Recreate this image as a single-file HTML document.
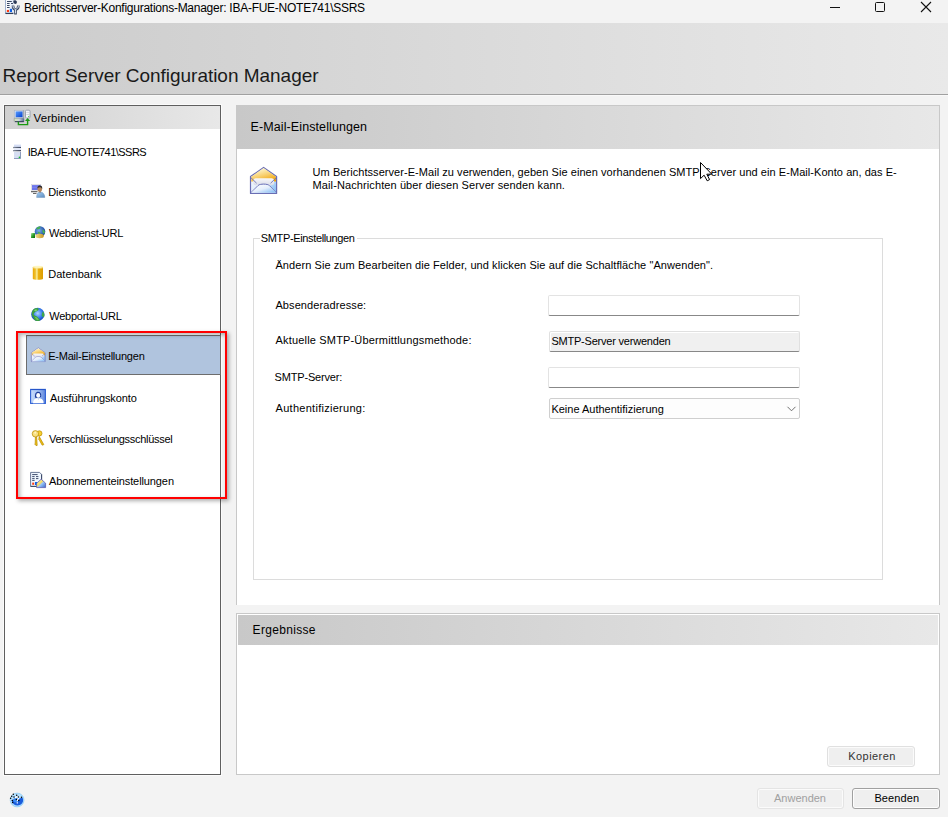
<!DOCTYPE html>
<html><head><meta charset="utf-8">
<style>
*{margin:0;padding:0;box-sizing:border-box}
html,body{width:948px;height:817px;overflow:hidden;background:#f3f3f3;font-family:"Liberation Sans",sans-serif;color:#000}
.a{position:absolute}
svg.a{overflow:visible}
.t{position:absolute;white-space:nowrap;line-height:1;font-size:11px}
</style></head><body>
<!-- title bar -->
<div class="a" style="left:0;top:0;width:948px;height:23px;background:#f3f3f3"></div>
<svg class="a" style="left:2px;top:0" width="20" height="18" viewBox="0 0 20 18">
 <defs><linearGradient id="tw" x1="0" y1="0" x2="1" y2="0"><stop offset="0" stop-color="#fff"/><stop offset="1" stop-color="#dfe9f8"/></linearGradient></defs>
 <path d="M3.6 -1V13.3H11.5" fill="none" stroke="#9fb0cc" stroke-width="1.2"/>
 <rect x="4.2" y="-1" width="7.5" height="14" fill="url(#tw)"/>
 <path d="M3.6 13.4H11.3" stroke="#2f3d5a" stroke-width="1.3"/>
 <path d="M5 1.5h4.8M5 3.5h2.6M9 3.5h2M5 5.5h2.6M5 7.5h2.6" stroke="#394865" stroke-width="1"/>
 <rect x="4.8" y="9.9" width="2.2" height="2.1" fill="#ff3a10"/>
 <rect x="7.8" y="8.8" width="2.2" height="3.2" fill="#0f62e6"/>
 <path d="M11.2 0.8C11.8 -0.2 14.2 -0.2 14.8 1.6C15.1 2.8 14.6 3.8 13.4 3.9L11.6 3.2Z" fill="#2c3a58"/>
 <path d="M11 5.4C11 8.2 12 9.3 13.5 9.6C15 9.3 16.4 8.2 16.4 5.4M13.5 9.6V14.4" fill="none" stroke="#34435f" stroke-width="2.6"/>
 <path d="M11 5.6C11 8 12 9 13.5 9.3C15 9 16.4 8 16.4 5.6M13.5 9.4V13.4" fill="none" stroke="#e6eefa" stroke-width="0.9"/>
</svg>
<!-- window controls -->
<div class="a" style="left:830px;top:7px;width:10px;height:1px;background:#111"></div>
<div class="a" style="left:875px;top:2px;width:10px;height:10px;border:1px solid #111;border-radius:1.5px"></div>
<svg class="a" style="left:920px;top:1px" width="12" height="12" viewBox="0 0 12 12"><path d="M1 1L11 11M11 1L1 11" stroke="#111" stroke-width="1.1"/></svg>

<!-- header band -->
<div class="a" style="left:0;top:23px;width:948px;height:71px;background:linear-gradient(to right,#cccccc,#e9e9e9)"></div>
<div class="a" style="left:0;top:94px;width:948px;height:1px;background:#a0a0a0"></div>
<div class="a" style="left:0;top:95px;width:948px;height:1px;background:#f9f9f9"></div>

<!-- left panel -->
<div class="a" style="left:3px;top:104px;width:219px;height:672px;border:1px solid #fbfbfb"></div>
<div class="a" style="left:4px;top:105px;width:217px;height:670px;background:#fff;border:1px solid #5f5f5f"></div>
<div class="a" style="left:5px;top:106px;width:215px;height:23px;background:linear-gradient(to right,#d0d0d0,#e8e8e8)"></div>
<div class="a" style="left:26px;top:335px;width:195px;height:40px;background:#b0c4de;border:1px solid #6d6d6d"></div>

<!-- Verbinden icon -->
<svg class="a" style="left:10px;top:106px" width="24" height="24" viewBox="0 0 24 24">
 <defs>
  <linearGradient id="vs" x1="0" y1="0" x2="1" y2="1"><stop offset="0" stop-color="#5a9cff"/><stop offset="1" stop-color="#0040d0"/></linearGradient>
  <linearGradient id="vk" x1="0" y1="0" x2="1" y2="0"><stop offset="0" stop-color="#d8e8b0"/><stop offset=".5" stop-color="#c8d4e0"/><stop offset="1" stop-color="#5a6a88"/></linearGradient>
 </defs>
 <rect x="4.3" y="4.3" width="9.6" height="7.8" fill="#e4eaf2" stroke="#aab4c4" stroke-width=".7"/>
 <rect x="5.6" y="5.4" width="7" height="5.8" fill="url(#vs)"/>
 <path d="M13.3 4.5V12" stroke="#8890a0" stroke-width=".8"/>
 <rect x="4.2" y="12.2" width="9.8" height="3.6" rx=".6" fill="url(#vk)" stroke="#6f7a90" stroke-width=".5"/>
 <path d="M5 15.6H13.8" stroke="#2a3650" stroke-width=".9"/>
 <rect x="15.5" y="4.2" width="4.5" height="7.8" rx="1" fill="#f6f8fb" stroke="#8a94a4" stroke-width=".8"/>
 <path d="M16.3 6.4H19.2M16.3 8.5H19.2" stroke="#b8c0cc" stroke-width=".6"/>
 <circle cx="18.7" cy="10.6" r=".6" fill="#30c030"/>
 <path d="M8.4 15.8V18.6H17.6V14" fill="none" stroke="#1a9a12" stroke-width="1.4"/>
 <path d="M15 15.1L17.6 12.1L20.2 15.1Z" fill="#1a9a12"/>
</svg>

<!-- server icon -->
<svg class="a" style="left:8px;top:140px" width="20" height="22" viewBox="0 0 20 22">
 <defs><linearGradient id="sb" x1="0" y1="0" x2="1" y2="0"><stop offset="0" stop-color="#8c95a4"/><stop offset=".5" stop-color="#5c6578"/><stop offset="1" stop-color="#3c4660"/></linearGradient></defs>
 <rect x="6" y="4.6" width="7" height="2.4" fill="#d4ddf4"/>
 <rect x="5" y="6.9" width="8" height="1.3" fill="url(#sb)"/>
 <rect x="6" y="8.2" width="7" height="1.9" fill="#e4eafa"/>
 <rect x="5" y="10" width="8" height="1.3" fill="url(#sb)"/>
 <rect x="6" y="12" width="7" height="6.9" fill="#d6def2"/>
 <path d="M12.5 12V18.5H6" fill="none" stroke="#8593b4" stroke-width=".9"/>
 <circle cx="11.4" cy="17.4" r=".8" fill="#18c030"/>
</svg>

<!-- Dienstkonto icon -->
<svg class="a" style="left:28px;top:180px" width="20" height="20" viewBox="0 0 20 20">
 <defs><linearGradient id="pb" x1="0" y1="0" x2="1" y2="1"><stop offset="0" stop-color="#a8d0f4"/><stop offset="1" stop-color="#5c8cc0"/></linearGradient></defs>
 <rect x="3.3" y="4.3" width="9.5" height="6" fill="#f4f4f8" stroke="#d0d0d8" stroke-width=".6"/>
 <rect x="4" y="5" width="8.4" height="5" fill="#6a72ea"/>
 <path d="M4 5.8H12M4 7.6H9" stroke="#8c94f0" stroke-width=".6"/>
 <rect x="3" y="11" width="6.5" height="1.3" fill="#6a6a6a"/>
 <rect x="5" y="13" width="3.5" height="1" fill="#6a6a6a"/>
 <path d="M8.6 17.4C8.8 13.6 10 12.2 12 12.1C14.2 12.1 16.4 13.2 16.8 17.4Z" fill="url(#pb)" stroke="#6a90b8" stroke-width=".5"/>
 <ellipse cx="11.8" cy="8.9" rx="2.3" ry="2.8" fill="#b8865a"/>
 <path d="M9.4 8.4C9.4 6 10.8 5.6 12 5.6C13.6 5.6 14.4 6.6 14.2 9C13.6 7.6 12.6 7.2 11.4 7.2C10.4 7.4 9.8 8 9.4 8.4Z" fill="#2a2a2a"/>
 <path d="M11.4 11.5L12 13.2L12.6 11.5Z" fill="#8a5020"/>
</svg>

<!-- Webdienst-URL icon -->
<svg class="a" style="left:28px;top:222px" width="20" height="20" viewBox="0 0 20 20">
 <defs>
  <radialGradient id="wg" cx=".4" cy=".4" r=".7"><stop offset="0" stop-color="#7ab0e8"/><stop offset=".7" stop-color="#2a58b0"/><stop offset="1" stop-color="#183a88"/></radialGradient>
  <linearGradient id="wq" x1="0" y1="0" x2="1" y2="1"><stop offset="0" stop-color="#b0e8a0"/><stop offset=".5" stop-color="#30a030"/><stop offset="1" stop-color="#006000"/></linearGradient>
  <linearGradient id="wy" x1="0" y1="0" x2="1" y2="0"><stop offset="0" stop-color="#f0dc90"/><stop offset="1" stop-color="#c89820"/></linearGradient>
 </defs>
 <circle cx="12" cy="9.6" r="5.3" fill="url(#wg)"/>
 <path d="M8.2 6.5C9.5 4.8 11.5 4.4 12.6 4.6L11.8 6.8L9.6 7.4ZM9.6 10C10.6 9.2 12 10 12.6 11.6L11 12.4ZM14.4 7.4C15.6 7.6 16.6 8.6 17 10.2L16 12L14.6 10.6Z" fill="#48b050"/>
 <ellipse cx="11.6" cy="14" rx="4.2" ry="2.2" fill="url(#wy)"/>
 <rect x="3" y="11" width="4" height="5" rx=".5" fill="url(#wq)"/>
</svg>

<!-- Datenbank icon -->
<svg class="a" style="left:28px;top:262px" width="20" height="20" viewBox="0 0 20 20">
 <defs><linearGradient id="db" x1="0" y1="0" x2="1" y2="0"><stop offset="0" stop-color="#e8a800"/><stop offset=".25" stop-color="#f0c030"/><stop offset=".4" stop-color="#faf0a0"/><stop offset=".55" stop-color="#eab010"/><stop offset="1" stop-color="#dc9c00"/></linearGradient></defs>
 <path d="M4.8 5V16.8C4.8 17.6 7.2 17.8 9.9 17.8C12.6 17.8 15 17.6 15 16.8V5Z" fill="url(#db)"/>
 <ellipse cx="9.9" cy="4.9" rx="5.1" ry="1.1" fill="#fff6c0"/>
 <path d="M4.8 5.6C6 6.4 13.8 6.4 15 5.6" fill="none" stroke="#f8e8a0" stroke-width=".8"/>
</svg>

<!-- Webportal-URL globe -->
<svg class="a" style="left:28px;top:304px" width="20" height="20" viewBox="0 0 20 20">
 <defs><radialGradient id="gb" cx=".5" cy=".42" r=".6"><stop offset="0" stop-color="#b0d8ff"/><stop offset=".55" stop-color="#3a80f0"/><stop offset="1" stop-color="#0c3cb0"/></radialGradient></defs>
 <circle cx="9.8" cy="10.4" r="6.6" fill="url(#gb)"/>
 <path d="M4.6 6.4C5.8 4.8 7.6 4 9.6 4.1L10.8 5.2L10 6.6L7 8L5.4 10.2L6.6 11.6L9 12.6L11.6 15.2L11.8 16.8C9.6 17.4 7.4 16.8 6 15.4L5.6 13.6L4.2 12C3.6 10 3.8 8 4.6 6.4Z" fill="#3ca040"/>
 <path d="M6 6.2L8 5.2L9.4 6.2L7.4 7.6Z" fill="#80d870"/>
 <path d="M14.8 7.4C16.2 8.6 16.8 10.4 16.4 12.6L15 13.2L13.6 11.6L14 9.4Z" fill="#40a848"/>
 <path d="M6.4 12.6L9 13.4L11 15.4L9 16.2Z" fill="#70c860"/>
</svg>

<!-- E-Mail small envelope -->
<svg class="a" style="left:28.5px;top:345px" width="19" height="19" viewBox="0 0 36 36">
 <use href="#env"/>
</svg>

<!-- Ausfuehrungskonto icon -->
<svg class="a" style="left:28px;top:385px" width="20" height="22" viewBox="0 0 20 22">
 <defs><linearGradient id="ab" x1="0" y1="0" x2="1" y2="0"><stop offset="0" stop-color="#c8dcfc"/><stop offset=".5" stop-color="#a8c4f4"/><stop offset="1" stop-color="#5c84dc"/></linearGradient></defs>
 <rect x="2.6" y="4.4" width="14.8" height="14" fill="url(#ab)" stroke="#2e60d4" stroke-width="1.1"/>
 <path d="M3.2 4.6H17" stroke="#2656c8" stroke-width="1"/>
 <path d="M7 12.6C6.6 9 7.8 6.8 10 6.8C12.2 6.8 13.6 8.4 13.2 11.6L12 12.4L8.2 13Z" fill="#1c3c9c"/>
 <ellipse cx="10.2" cy="10.4" rx="2" ry="2.4" fill="#fff"/>
 <path d="M5 18.2C5 14.8 7 13.4 9 13.2H11.4C13.6 13.4 15.6 14.8 15.6 18.2Z" fill="#fff"/>
 <path d="M9.6 13.6L10.3 15L11 13.6Z" fill="#a8c0e8"/>
</svg>

<!-- keys icon -->
<svg class="a" style="left:28px;top:427px" width="20" height="22" viewBox="0 0 20 22">
 <g stroke="#b88a00" stroke-width=".7">
  <path d="M11.2 9.4L15.8 17.6L14.2 18.2L11.6 13.6L10.8 12.6Z" fill="#f0c010"/>
  <circle cx="11.4" cy="6.4" r="2.6" fill="#f8d030"/>
  <path d="M7.4 9.6L8.6 9.6L9.2 18.4L8 18.6L7.6 17.6L6.8 17.4L7.2 16.2Z" fill="#f0c418"/>
  <circle cx="7.4" cy="6.8" r="3.2" fill="#f8e080"/>
 </g>
 <circle cx="7.2" cy="5.8" r="1" fill="#fff4c0"/>
</svg>

<!-- Abonnement icon -->
<svg class="a" style="left:28px;top:469px" width="20" height="22" viewBox="0 0 20 22">
 <defs><linearGradient id="ae" x1="0" y1="0" x2="1" y2="1"><stop offset="0" stop-color="#fffbe0"/><stop offset=".45" stop-color="#f4d860"/><stop offset=".55" stop-color="#9cc8f8"/><stop offset="1" stop-color="#3a64c8"/></linearGradient></defs>
 <path d="M2.6 3.4H11.6L13.6 5.4V17.4H2.6Z" fill="#eef6ff" stroke="#6a7898" stroke-width="1"/>
 <path d="M13.6 5.4V17.4H2.6" fill="none" stroke="#3a4866" stroke-width="1"/>
 <path d="M4.2 5.6H9.6M4.2 7.6H6.6M8 7.6H10.4M4.2 9.6H6.6M8 9.6H10.4M4.2 11.4H6.6" stroke="#3e4c6c" stroke-width="1"/>
 <rect x="4.2" y="13.6" width="2" height="2.2" fill="#ff3c10"/>
 <rect x="7" y="13" width="2" height="3" fill="#0c66e8"/>
 <path d="M8.6 14.4L13.2 10.2L17.6 14.2V18.6H8.6Z" fill="url(#ae)" stroke="#5a5ab0" stroke-width=".8"/>
</svg>

<!-- red annotation -->
<!--OVERLAY_PLACEHOLDER-->

<!-- main panel -->
<div class="a" style="left:236px;top:105px;width:704px;height:500px;background:#fff;border:1px solid #c8c8c8;border-bottom:none"></div>
<div class="a" style="left:237px;top:106px;width:702px;height:43px;background:linear-gradient(to right,#c8c8c8,#e8e8e8)"></div>

<!-- big envelope -->
<svg class="a" style="left:246px;top:162px" width="36" height="36" viewBox="0 0 36 36">
 <defs>
  <linearGradient id="ef" x1="0.3" y1="0" x2="0.8" y2="1"><stop offset="0" stop-color="#fffbd8"/><stop offset=".5" stop-color="#f8d070"/><stop offset="1" stop-color="#f0a000"/></linearGradient>
  <linearGradient id="eb" x1="0" y1="0" x2="1" y2="1"><stop offset="0" stop-color="#ffffff"/><stop offset=".5" stop-color="#e4eefc"/><stop offset="1" stop-color="#7ab8f4"/></linearGradient>
  <linearGradient id="ep" x1="0" y1="0" x2="0" y2="1"><stop offset="0" stop-color="#f8f8fa"/><stop offset="1" stop-color="#dadce8"/></linearGradient>
 </defs>
 <g id="env">
  <path d="M4.5 14.6L17.6 5.4L30.6 14.6V31.4H4.5Z" fill="url(#eb)" stroke="#6a6eb4" stroke-width="1.2" stroke-linejoin="round"/>
  <path d="M5.1 14.8L17.6 6.1L30 14.8V19.5L5.1 19.5Z" fill="url(#ef)"/>
  <rect x="7.3" y="16.2" width="20.8" height="7" rx="2.5" fill="url(#ep)"/>
  <path d="M5 15.8L10.6 21.2M30.2 15.8L24.6 21.2" stroke="#6a70b8" stroke-width=".9"/>
  <path d="M5 30.6L12 23.6C14 21.6 21.4 21.6 23.4 23.6L30.2 30.6" fill="#eef4fc" stroke="#6a70b8" stroke-width="1"/>
  <path d="M5.4 30.6L12 24.4C14 22.6 21.4 22.6 23.4 24.4L29.8 30.6Z" fill="url(#eb)"/>
 </g>
</svg>

<!-- group box -->
<div class="a" style="left:253px;top:238px;width:630px;height:342px;border:1px solid #dcdcdc"></div>
<div class="a" style="left:260px;top:235px;width:97px;height:8px;background:#fff"></div>

<div class="a" style="left:548px;top:295px;width:252px;height:21px;background:#fff;border:1px solid #e3e3e3;border-bottom:1px solid #888;border-radius:2px"></div>
<div class="a" style="left:549px;top:331px;width:251px;height:21px;background:#f0f0f0;border:1px solid #e0e0e0;border-bottom:1px solid #888;border-radius:2px;box-shadow:inset 1px 1px 0 #fff"></div>
<div class="a" style="left:548px;top:367px;width:252px;height:21px;background:#fff;border:1px solid #e3e3e3;border-bottom:1px solid #888;border-radius:2px"></div>
<div class="a" style="left:549px;top:398px;width:251px;height:21px;background:#fdfdfd;border:1px solid #cfcfcf;border-radius:2px"></div>
<svg class="a" style="left:787px;top:406px" width="9" height="6" viewBox="0 0 9 6"><path d="M0.5 0.8L4.5 4.8L8.5 0.8" fill="none" stroke="#606060" stroke-width="0.9"/></svg>

<!-- results panel -->
<div class="a" style="left:236px;top:613px;width:704px;height:162px;background:#fff;border:1px solid #c8c8c8"></div>
<div class="a" style="left:238px;top:615px;width:700px;height:30px;background:linear-gradient(to right,#c8c8c8,#e8e8e8)"></div>
<div class="a" style="left:827px;top:746px;width:88px;height:21px;background:#efefef;border:1px solid #e0e0e0;border-radius:3px;box-shadow:inset 0 0 0 1px #fbfbfb"></div>

<!-- bottom buttons -->
<div class="a" style="left:757px;top:788px;width:87px;height:21px;background:#f0f0f0;border:1px solid #e4e4e4;border-radius:3px;box-shadow:inset 0 0 0 1px #fbfbfb"></div>
<div class="a" style="left:852px;top:788px;width:88px;height:21px;background:#efefef;border:1px solid #a0a0a0;border-radius:3px;box-shadow:inset 0 0 0 1px #fdfdfd"></div>

<!-- help icon -->
<svg class="a" style="left:2px;top:786px" width="28" height="28" viewBox="0 0 28 28">
 <circle cx="15.1" cy="14" r="7" fill="#b4e0ff"/>
 <circle cx="15.1" cy="14" r="6.9" fill="none" stroke="#7cc4f4" stroke-width=".6"/>
 <path d="M9.6 14.4C10.4 18.6 14.6 20.4 18.4 18.8C21 17.4 21.8 14.4 20.6 11.8C19.6 11.4 17.6 12.2 16.4 13.6C14.6 12.6 12 12.6 9.6 14.4Z" fill="#1a5cdc"/>
 <circle cx="13.8" cy="14.2" r="2.4" fill="#3a8cf4"/>
 <path d="M13.2 12.2C13.2 10.6 16.6 10.4 16.6 12.2C16.6 13.2 15.3 13.4 15.3 15.2" fill="none" stroke="#fff" stroke-width="1.2"/>
 <rect x="14.7" y="16.2" width="1.2" height="1.3" fill="#fff"/>
 <g fill="#000"><circle cx="11.3" cy="8.3" r=".75"/><circle cx="9.7" cy="10.3" r=".75"/><circle cx="8.6" cy="12.3" r=".75"/><circle cx="14.7" cy="9.3" r=".75"/><circle cx="16.4" cy="11" r=".75"/><circle cx="12" cy="11" r=".75"/><circle cx="10.3" cy="14.4" r=".75"/><circle cx="10.6" cy="16.4" r=".75"/><circle cx="14.4" cy="13.4" r=".75"/><circle cx="16.8" cy="14.4" r=".75"/><circle cx="19.5" cy="11.3" r=".75"/></g>
</svg>

<div class="t" id="title" style="left:24.00px;top:1.81px;font-size:12px;letter-spacing:-0.259px;color:#000">Berichtsserver-Konfigurations-Manager: IBA-FUE-NOTE741\SSRS</div>
<div class="t" id="rscm" style="left:2.60px;top:65.80px;font-size:19px;letter-spacing:-0.026px;color:#1a1a1a">Report Server Configuration Manager</div>
<div class="t" id="verb" style="left:33.60px;top:112.81px;font-size:11.5px;letter-spacing:0.075px;color:#000">Verbinden</div>
<div class="t" id="iba" style="left:27.80px;top:147.21px;font-size:11px;letter-spacing:-0.532px;color:#000">IBA-FUE-NOTE741\SSRS</div>
<div class="t" id="n1" style="left:48.20px;top:187.00px;font-size:11px;letter-spacing:-0.020px;color:#000">Dienstkonto</div>
<div class="t" id="n2" style="left:49.00px;top:227.71px;font-size:11px;letter-spacing:-0.258px;color:#000">Webdienst-URL</div>
<div class="t" id="n3" style="left:48.20px;top:269.00px;font-size:11px;letter-spacing:0.025px;color:#000">Datenbank</div>
<div class="t" id="n4" style="left:49.20px;top:311.00px;font-size:11px;letter-spacing:-0.242px;color:#000">Webportal-URL</div>
<div class="t" id="n5" style="left:48.20px;top:351.00px;font-size:11px;letter-spacing:-0.226px;color:#000">E-Mail-Einstellungen</div>
<div class="t" id="n6" style="left:50.00px;top:393.31px;font-size:11px;letter-spacing:-0.127px;color:#000">Ausführungskonto</div>
<div class="t" id="n7" style="left:49.00px;top:434.10px;font-size:11px;letter-spacing:-0.300px;color:#000">Verschlüsselungsschlüssel</div>
<div class="t" id="n8" style="left:49.00px;top:475.91px;font-size:11px;letter-spacing:-0.100px;color:#000">Abonnementeinstellungen</div>
<div class="t" id="hdr" style="left:250.60px;top:121.20px;font-size:12.5px;letter-spacing:0.095px;color:#000">E-Mail-Einstellungen</div>
<div class="t" id="b1" style="left:312.60px;top:166.60px;font-size:11px;letter-spacing:0.053px;color:#000">Um Berichtsserver-E-Mail zu verwenden, geben Sie einen vorhandenen SMTP-Server und ein E-Mail-Konto an, das E-</div>
<div class="t" id="b2" style="left:312.60px;top:179.81px;font-size:11px;letter-spacing:0.100px;color:#000">Mail-Nachrichten über diesen Server senden kann.</div>
<div class="t" id="grp" style="left:260.80px;top:233.21px;font-size:11px;letter-spacing:-0.359px;color:#000">SMTP-Einstellungen</div>
<div class="t" id="chg" style="left:275.40px;top:260.00px;font-size:11px;letter-spacing:0.079px;color:#000">Ändern Sie zum Bearbeiten die Felder, und klicken Sie auf die Schaltfläche "Anwenden".</div>
<div class="t" id="l1" style="left:275.40px;top:300.21px;font-size:11px;letter-spacing:0.100px;color:#000">Absenderadresse:</div>
<div class="t" id="l2" style="left:275.60px;top:335.00px;font-size:11px;letter-spacing:0.168px;color:#000">Aktuelle SMTP-Übermittlungsmethode:</div>
<div class="t" id="l3" style="left:274.60px;top:372.10px;font-size:11px;letter-spacing:-0.173px;color:#000">SMTP-Server:</div>
<div class="t" id="l4" style="left:275.60px;top:403.00px;font-size:11px;letter-spacing:0.276px;color:#000">Authentifizierung:</div>
<div class="t" id="v2" style="left:551.40px;top:335.81px;font-size:11px;letter-spacing:-0.210px;color:#000">SMTP-Server verwenden</div>
<div class="t" id="v4" style="left:551.40px;top:403.91px;font-size:11px;letter-spacing:-0.005px;color:#000">Keine Authentifizierung</div>
<div class="t" id="res" style="left:252.60px;top:624.41px;font-size:12px;letter-spacing:0.311px;color:#000">Ergebnisse</div>
<div class="t" id="kop" style="left:848.20px;top:751.00px;font-size:11px;letter-spacing:0.457px;color:#333">Kopieren</div>
<div class="t" id="anw" style="left:774.00px;top:793.41px;font-size:11px;letter-spacing:0.000px;color:#a0a0a0">Anwenden</div>
<div class="t" id="bee" style="left:874.40px;top:793.41px;font-size:11px;letter-spacing:0.100px;color:#000">Beenden</div>

<!-- red annotation overlay -->
<div class="a" style="left:16px;top:331px;width:211px;height:168px;border:2px solid #ff0000;box-shadow:2px 2px 4px rgba(0,0,0,.32), inset 2px 2px 4px rgba(0,0,0,.3)"></div>

<!-- cursor -->
<svg class="a" style="left:700px;top:162px" width="14" height="20" viewBox="0 0 14 20">
 <path d="M0.5 0.5V16.6L4.1 13.2L7.2 18.8L9.6 17.6L6.8 12.2H11.8Z" fill="#fff" stroke="#000" stroke-width="1" stroke-linejoin="round"/>
</svg>
</body></html>
